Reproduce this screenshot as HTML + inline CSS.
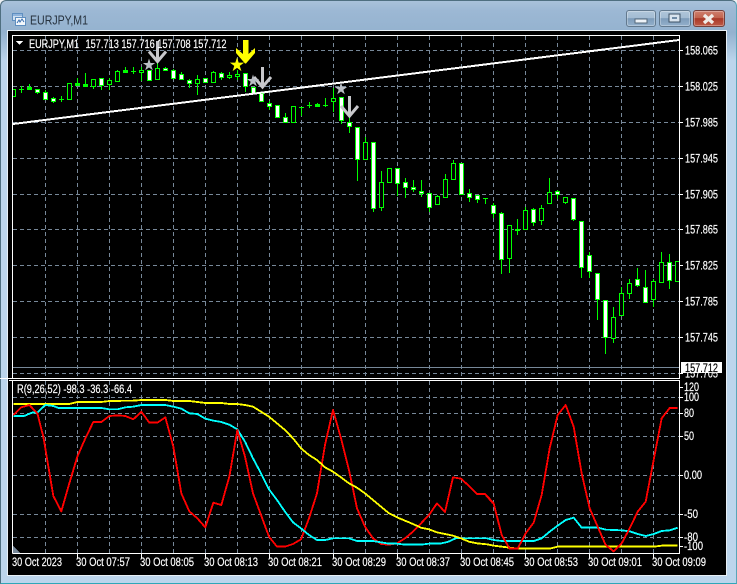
<!DOCTYPE html>
<html><head><meta charset="utf-8"><style>
html,body{margin:0;padding:0;width:737px;height:584px;overflow:hidden;background:#eef1f4}
#win{position:absolute;left:0;top:0;width:735px;height:582px;border:1px solid #4f6f80;border-bottom-color:#2fa7b8;border-right-color:#5aa5b8;border-radius:6px 6px 0 0;background:linear-gradient(180deg,#a9c2da 0,#9cb8d4 10px,#94b2cf 32px,#bcd5ec 60px,#bcd5ec 100%)}
#cl{position:absolute;left:8px;top:31px;width:718px;height:544px;background:#000;box-shadow:0 0 0 1px #e8f0f6}
.b{position:absolute;top:10px;height:17px;border:1px solid #62798e;border-radius:3px;box-sizing:border-box;background:linear-gradient(180deg,#b0c6da 0,#a3bcd3 45%,#7d9cba 50%,#93b0cb 100%);box-shadow:inset 0 0 0 1px rgba(255,255,255,.3)}
svg{position:absolute;left:0;top:0}
text{font-family:"Liberation Sans",sans-serif;font-size:11.5px;fill:#fff;stroke:#fff;stroke-width:.18px}
text.k{fill:#000;stroke:#000}
text.h{font-size:12.5px;fill:#26323e;stroke:none}
</style></head><body>
<div id="win"></div>
<div id="cl"></div>
<svg width="16" height="15" style="left:11px;top:12px" viewBox="0 0 16 15"><rect x="1.5" y="1.5" width="10" height="7" fill="#cfe0f0" stroke="#5f8fc0"/><rect x="4.5" y="5.5" width="10" height="8" fill="#f4f8fc" stroke="#5f8fc0"/><path d="M6 11l2-3 1 2 2-3 2 3" fill="none" stroke="#3a70b0"/><path d="M2 3h9" stroke="#4f87c7"/></svg>
<div class="b" style="left:626px;width:30px"></div>
<div class="b" style="left:659px;width:32px"></div>
<div class="b" style="left:693px;width:32px;border-color:#73403c;background:linear-gradient(180deg,#cf7f6e 0,#c2644f 45%,#a83828 50%,#bf5a47 100%)"></div>
<svg width="737" height="584" viewBox="0 0 737 584" shape-rendering="crispEdges">
<defs><clipPath id="m"><rect x="13" y="36" width="666" height="342"/></clipPath><clipPath id="i"><rect x="13" y="381" width="666" height="172"/></clipPath></defs>
<!-- window button glyphs -->
<rect x="635" y="19" width="12" height="4" fill="#eef3f8" stroke="#54687a"/>
<rect x="669" y="14" width="11" height="8" fill="#d9e4ee" stroke="#3d5266" stroke-width="1"/><rect x="672" y="17" width="5" height="2" fill="#6f8ba6"/>
<path d="M704 15l9 8M713 15l-9 8" stroke="#f0ece8" stroke-width="3.4" shape-rendering="auto"/>
<!-- grid main -->
<g stroke="#778899" stroke-dasharray="4 3" fill="none">
<path d="M13 50.500H679M13 86.500H679M13 122.500H679M13 158.500H679M13 194.500H679M13 229.500H679M13 265.500H679M13 301.500H679M13 337.500H679M13 373.500H679"/>
<path d="M45.500 36V378M77.500 36V378M109.500 36V378M141.500 36V378M173.500 36V378M205.500 36V378M237.500 36V378M269.500 36V378M301.500 36V378M333.500 36V378M365.500 36V378M397.500 36V378M429.500 36V378M461.500 36V378M493.500 36V378M525.500 36V378M557.500 36V378M589.500 36V378M621.500 36V378M653.500 36V378"/>
<path d="M13 397.500H679M13 413.500H679M13 436.500H679M13 475.500H679M13 514.500H679M13 537.500H679"/>
<path d="M45.500 381V553M77.500 381V553M109.500 381V553M141.500 381V553M173.500 381V553M205.500 381V553M237.500 381V553M269.500 381V553M301.500 381V553M333.500 381V553M365.500 381V553M397.500 381V553M429.500 381V553M461.500 381V553M493.500 381V553M525.500 381V553M557.500 381V553M589.500 381V553M621.500 381V553M653.500 381V553"/>
</g>
<g clip-path="url(#m)">
<!-- wicks -->
<path stroke="#0f0" fill="none" d="M21.500 86V93M29.500 84V90M37.500 89V94M45.500 90V99M53.500 97V103M61.500 96V102M69.500 83V100M77.500 78V85M85.500 73V86M93.500 79V89M101.500 78V90M109.500 78V90M117.500 70V81M125.500 67V72M133.500 67V74M141.500 67V81M149.500 70V81M157.500 62V79M165.500 67V70M173.500 69V78M181.500 72V80M189.500 79V88M197.500 75V95M205.500 78V82M213.500 71V83M221.500 72V80M229.500 72V79M237.500 70V80M245.500 73V92M253.500 87V93M261.500 93V102M269.500 101V110M277.500 105V118M285.500 113V122M293.500 106V123M301.500 107V116M309.500 102V108M317.500 103V107M325.500 98V107M333.500 88V112M341.500 97V124M349.500 118V133M357.500 127V181M365.500 137V159M373.500 142V212M381.500 171V211M389.500 168V182M397.500 168V196M405.500 178V198M413.500 180V192M421.500 180V197M429.500 193V212M437.500 195V205M445.500 174V198M453.500 160V180M461.500 163V194M469.500 189V202M477.500 195V203M485.500 198V204M493.500 203V218M501.500 212V274M509.500 225V273M517.500 219V235M525.500 207V230M533.500 208V226M541.500 205V225M549.500 178V203M557.500 190V199M565.500 197V204M573.500 198V221M581.500 221V278M589.500 252V278M597.500 273V320M605.500 300V354M613.500 307V343M621.500 287V315M629.500 279V299M637.500 268V287M645.500 270V302M653.500 279V307M661.500 252V282M669.500 254V289M677.500 261V281"/>
<!-- green dojis -->
<path stroke="#0f0" fill="#0f0" d="M19 89.500h5M27.500 87.500h4v2h-4zM59 99.500h5M75.500 83.500h4v2h-4zM83.500 84.500h4v2h-4zM123.500 70.500h4v2h-4zM131 71.500h5M299 107.500h5M307 105.500h5M315.500 104.500h4v2h-4zM323 105.500h5M483 198.500h5M515.500 229.500h4v1h-4z"/>
<!-- hollow -->
<path stroke="#0f0" fill="#000" d="M11.500 89.500h4v7h-4zM67.500 83.500h4v16h-4zM91.500 79.500h4v7h-4zM107.500 80.500h4v4h-4zM115.500 71.500h4v10h-4zM139.500 70.500h4v2h-4zM155.500 68.500h4v11h-4zM195.500 79.500h4v4h-4zM211.500 72.500h4v10h-4zM227.500 75.500h4v2h-4zM235.500 74.500h4v2h-4zM291.500 106.500h4v16h-4zM331.500 98.500h4v3h-4zM363.500 142.500h4v17h-4zM379.500 182.500h4v25h-4zM387.500 168.500h4v14h-4zM435.500 196.500h4v8h-4zM443.500 179.500h4v18h-4zM451.500 163.500h4v16h-4zM507.500 225.500h4v33h-4zM523.500 210.500h4v19h-4zM539.500 208.500h4v12h-4zM547.500 192.500h4v11h-4zM563.500 197.500h4v5h-4zM611.500 317.500h4v21h-4zM619.500 293.500h4v22h-4zM627.500 283.500h4v10h-4zM651.500 281.500h4v18h-4zM659.500 262.500h4v20h-4zM675.500 261.500h4v20h-4z"/>
<!-- white -->
<path stroke="#0f0" fill="#fff" d="M35.500 89.500h4v3h-4zM43.500 92.500h4v7h-4zM51.500 98.500h4v3h-4zM99.500 78.500h4v7h-4zM147.500 70.500h4v10h-4zM163.500 68.500h4v2h-4zM171.500 70.500h4v8h-4zM179.500 74.500h4v5h-4zM187.500 80.500h4v3h-4zM203.500 78.500h4v4h-4zM219.500 73.500h4v4h-4zM243.500 73.500h4v13h-4zM251.500 87.500h4v6h-4zM259.500 93.500h4v8h-4zM267.500 103.500h4v3h-4zM275.500 105.500h4v12h-4zM283.500 117.500h4v5h-4zM339.500 97.500h4v23h-4zM347.500 122.500h4v4h-4zM355.500 127.500h4v32h-4zM371.500 142.500h4v66h-4zM395.500 168.500h4v15h-4zM403.500 182.500h4v5h-4zM411.500 187.500h4v2h-4zM419.500 191.500h4v2h-4zM427.500 193.500h4v14h-4zM459.500 163.500h4v31h-4zM467.500 193.500h4v4h-4zM475.500 195.500h4v4h-4zM491.500 205.500h4v8h-4zM499.500 213.500h4v46h-4zM531.500 209.500h4v13h-4zM555.500 191.500h4v3h-4zM571.500 198.500h4v21h-4zM579.500 221.500h4v46h-4zM587.500 255.500h4v16h-4zM595.500 273.500h4v26h-4zM603.500 300.500h4v37h-4zM635.500 279.500h4v6h-4zM643.500 287.500h4v15h-4zM667.500 262.500h4v18h-4z"/>
<!-- trend line -->
<path d="M13 124L679 40" stroke="#fff" stroke-width="2" fill="none"/>
<!-- price line -->
<path d="M13 367.500H679" stroke="#778899"/>
<!-- arrows and stars -->
<g shape-rendering="auto" fill="none" stroke-linejoin="miter">
<path d="M157.500 41V61M149 51.500l8.500 10 8.500-10" stroke="#c8c8cc" stroke-width="3"/>
<path d="M262.500 67V87M254 77l8.500 10 8.500-10" stroke="#c8c8cc" stroke-width="3"/>
<path d="M349.500 96V116M341 106l8.500 10 8.500-10" stroke="#c8c8cc" stroke-width="3"/>
<polygon fill="#ff0" points="243,40 248.500,40 248.500,54 255,48 255,53 246,63.500 245,63.500 236,53 236,48 243,54"/>
<polygon transform="translate(237 65) scale(7.500)" fill="#ff0" points="0,-1 .2245,-.309 .951,-.309 .363,.118 .588,.809 0,.382 -.588,.809 -.363,.118 -.951,-.309 -.2245,-.309"/>
<polygon transform="translate(149 65) scale(6.500)" fill="#b9bdc4" points="0,-1 .2245,-.309 .951,-.309 .363,.118 .588,.809 0,.382 -.588,.809 -.363,.118 -.951,-.309 -.2245,-.309"/>
<polygon transform="translate(253 81) scale(6.500)" fill="#b9bdc4" points="0,-1 .2245,-.309 .951,-.309 .363,.118 .588,.809 0,.382 -.588,.809 -.363,.118 -.951,-.309 -.2245,-.309"/>
<polygon transform="translate(341 89) scale(6.500)" fill="#b9bdc4" points="0,-1 .2245,-.309 .951,-.309 .363,.118 .588,.809 0,.382 -.588,.809 -.363,.118 -.951,-.309 -.2245,-.309"/>
</g>
</g>
<!-- indicator lines -->
<g clip-path="url(#i)" fill="none" stroke-width="5.500" stroke-linejoin="round">
<g transform="translate(0 370) scale(.33333)">
<polyline stroke="#ff0" points="40,102 208,102 232,96 304,96 328,93 400,92 424,90 496,90 520,93 568,93 592,96 616,99 664,99 688,102 712,102 735,105"/>
<polyline stroke="#0ff" points="40,138 72,138 96,128 112,128 136,105 160,108 176,114 304,114 328,118 352,118 376,112 400,110 424,105 496,105 520,110 544,116 568,130 592,132 616,146 640,152 664,156 688,164 712,178 735,215"/>
<polyline stroke="#f00" points="40,135 64,112 88,105 112,130 130,200 160,378 184,424 208,340 232,260 256,205 280,156 304,156 328,138 352,136 376,138 400,148 424,125 448,158 472,158 496,142 520,230 544,370 568,424 592,445 616,472 640,398 664,405 688,320 712,180 735,260"/>
</g>
<g transform="translate(245 370) scale(.33333)">
<polyline stroke="#f00" points="0,260 24,370 48,435 72,500 96,530 120,530 144,522 168,508 192,445 216,370 240,225 264,120 288,205 312,300 336,415 360,470 384,505 408,522 432,524 456,520 480,505 504,485 528,460 552,435 576,400 600,426 624,322 648,326 672,348 696,372 720,372 744,400"/>
<polyline stroke="#0ff" points="0,215 24,265 48,310 72,358 96,390 120,425 144,457 168,475 192,495 216,510 240,510 264,505 312,505 336,513 384,513 408,517 432,521 456,521 480,524 528,524 552,521 584,521 608,516 632,505 720,505 726,505"/>
<polyline stroke="#ff0" points="0,105 24,110 48,125 72,140 96,160 120,180 144,205 168,235 192,255 216,270 240,292 264,305 288,322 312,340 336,353 360,370 384,390 408,410 432,430 456,442 480,452 504,462 528,473 552,478 576,487 600,492 624,497 648,505 672,515 696,520 726,523"/>
</g>
<g transform="translate(487 370) scale(.33333)">
<polyline stroke="#0ff" points="0,505 20,510 44,513 140,513 164,505 188,485 212,467 236,450 260,443 284,473 332,473 356,479 404,481 428,484 452,492 476,498 500,492 524,483 548,481 572,473"/>
<polyline stroke="#ff0" points="0,523 20,527 44,530 92,536 188,536 212,530 500,530 524,527 572,527"/>
<polyline stroke="#f00" points="0,378 20,400 44,495 68,536 92,536 116,490 140,458 164,375 188,235 212,135 236,105 260,170 284,310 308,415 332,470 356,525 380,544 404,520 428,475 452,425 476,395 500,270 524,145 548,114 572,114"/>
</g>
</g>
<!-- frames -->
<path d="M12.500 378.500V35.500H679.500V378.500H0M12.500 553.500V380.500H679.500V553.500H12.500" fill="none" stroke="#fff"/>
<path d="M9 378.500H12M9 380.500H12" stroke="#fff"/>
<path d="M13 546l7 7h-7z" fill="#778899"/>
<path stroke="#fff" d="M680 50.500h3M680 86.500h3M680 122.500h3M680 158.500h3M680 194.500h3M680 229.500h3M680 265.500h3M680 301.500h3M680 337.500h3M680 373.500h3M680 387.500h3M680 397.500h3M680 413.500h3M680 436.500h3M680 475.500h3M680 514.500h3M680 537.500h3M680 546.500h3M77.500 554v4M141.500 554v4M205.500 554v4M269.500 554v4M333.500 554v4M397.500 554v4M461.500 554v4M525.500 554v4M589.500 554v4M653.500 554v4"/>
<path d="M16 41h7l-3.500 4z" fill="#fff"/>
</svg>
<svg width="737" height="584" viewBox="0 0 737 584">
<text class="h" x="30" y="24.500" textLength="58" lengthAdjust="spacingAndGlyphs">EURJPY,M1</text>
<text x="29" y="48" textLength="50" lengthAdjust="spacingAndGlyphs">EURJPY,M1</text>
<text x="85.500" y="48" textLength="141" lengthAdjust="spacingAndGlyphs">157.713 157.716 157.708 157.712</text>
<g>
<text x="685" y="54.500" textLength="33" lengthAdjust="spacingAndGlyphs">158.065</text>
<text x="685" y="90.500" textLength="33" lengthAdjust="spacingAndGlyphs">158.025</text>
<text x="685" y="126.500" textLength="33" lengthAdjust="spacingAndGlyphs">157.985</text>
<text x="685" y="162.500" textLength="33" lengthAdjust="spacingAndGlyphs">157.945</text>
<text x="685" y="198.500" textLength="33" lengthAdjust="spacingAndGlyphs">157.905</text>
<text x="685" y="233.500" textLength="33" lengthAdjust="spacingAndGlyphs">157.865</text>
<text x="685" y="269.500" textLength="33" lengthAdjust="spacingAndGlyphs">157.825</text>
<text x="685" y="305.500" textLength="33" lengthAdjust="spacingAndGlyphs">157.785</text>
<text x="685" y="341.500" textLength="33" lengthAdjust="spacingAndGlyphs">157.745</text>
<text x="685" y="377.500" textLength="33" lengthAdjust="spacingAndGlyphs">157.705</text>
</g>
<rect x="681" y="362" width="41" height="11" fill="#fff"/>
<text class="k" x="685" y="372" textLength="33" lengthAdjust="spacingAndGlyphs">157.712</text>
<text x="17" y="393" textLength="115" lengthAdjust="spacingAndGlyphs">R(9,26,52) -98.3 -36.3 -66.4</text>
<text x="684" y="391" textLength="15" lengthAdjust="spacingAndGlyphs">120</text>
<text x="684" y="401" textLength="15" lengthAdjust="spacingAndGlyphs">100</text>
<text x="684" y="417" textLength="10" lengthAdjust="spacingAndGlyphs">80</text>
<text x="684" y="440" textLength="10" lengthAdjust="spacingAndGlyphs">50</text>
<text x="684" y="479" textLength="18" lengthAdjust="spacingAndGlyphs">0.00</text>
<text x="684" y="518" textLength="14" lengthAdjust="spacingAndGlyphs">-50</text>
<text x="684" y="541" textLength="14" lengthAdjust="spacingAndGlyphs">-80</text>
<text x="684" y="550" textLength="19" lengthAdjust="spacingAndGlyphs">-100</text>
<text x="12" y="566" textLength="50" lengthAdjust="spacingAndGlyphs">30 Oct 2023</text>
<text x="76" y="566" textLength="54" lengthAdjust="spacingAndGlyphs">30 Oct 07:57</text>
<text x="140" y="566" textLength="54" lengthAdjust="spacingAndGlyphs">30 Oct 08:05</text>
<text x="204" y="566" textLength="54" lengthAdjust="spacingAndGlyphs">30 Oct 08:13</text>
<text x="268" y="566" textLength="54" lengthAdjust="spacingAndGlyphs">30 Oct 08:21</text>
<text x="332" y="566" textLength="54" lengthAdjust="spacingAndGlyphs">30 Oct 08:29</text>
<text x="396" y="566" textLength="54" lengthAdjust="spacingAndGlyphs">30 Oct 08:37</text>
<text x="460" y="566" textLength="54" lengthAdjust="spacingAndGlyphs">30 Oct 08:45</text>
<text x="524" y="566" textLength="54" lengthAdjust="spacingAndGlyphs">30 Oct 08:53</text>
<text x="588" y="566" textLength="54" lengthAdjust="spacingAndGlyphs">30 Oct 09:01</text>
<text x="652" y="566" textLength="54" lengthAdjust="spacingAndGlyphs">30 Oct 09:09</text>
</svg>
</body></html>
